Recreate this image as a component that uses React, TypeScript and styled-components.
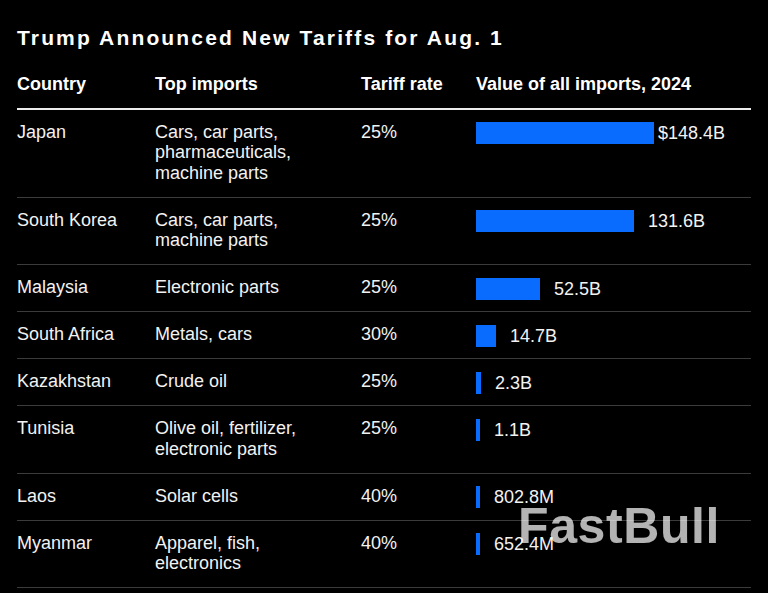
import React from "react";
import styled, { createGlobalStyle } from "styled-components";

const GlobalStyle = createGlobalStyle`
  html, body {
    margin: 0;
    padding: 0;
    background: #000;
  }
  body {
    font-family: "Liberation Sans", Arial, Helvetica, sans-serif;
    color: #f4f4f4;
  }
`;

const Page = styled.div`
  position: relative;
  width: 768px;
  height: 593px;
  box-sizing: border-box;
  padding: 25px 17px 0;
  background: #000;
  overflow: hidden;
`;

const Title = styled.h1`
  margin: 0;
  font-size: 21px;
  line-height: 26px;
  font-weight: 700;
  letter-spacing: 2.15px;
  color: #fff;
`;

const Table = styled.div`
  margin-top: 23px;
  display: flex;
  flex-direction: column;
`;

const gridCols = `138px 206px 115px 1fr`;

const HeaderRow = styled.div`
  display: grid;
  grid-template-columns: ${gridCols};
  padding-bottom: 13px;
  border-bottom: 2px solid #ececec;
`;

const HeaderCell = styled.div`
  font-size: 18px;
  line-height: 20.5px;
  font-weight: 700;
  color: #fff;
  white-space: nowrap;
`;

const Row = styled.div`
  display: grid;
  grid-template-columns: ${gridCols};
  padding: 12px 0 13.5px;
  border-bottom: 1px solid #3b3b3b;
`;

const Cell = styled.div`
  font-size: 18px;
  line-height: 20.5px;
  color: #f2f2f2;
`;

const ValueCell = styled.div`
  display: flex;
  align-items: center;
  align-self: start;
  height: 22px;
  margin-top: 0.5px;
  margin-bottom: -2px;
`;

const Bar = styled.div`
  height: 22px;
  background: #0a6bff;
  flex: none;
`;

const ValueLabel = styled.span`
  margin-left: 14px;
  font-size: 18px;
  line-height: 22px;
  color: #f2f2f2;
  white-space: nowrap;
`;

const Currency = styled.span`
  margin-left: -10px;
`;

const Watermark = styled.div`
  position: absolute;
  left: 518px;
  top: 501px;
  font-size: 50px;
  line-height: 50px;
  font-weight: 700;
  letter-spacing: 0.6px;
  color: rgba(255, 255, 255, 0.7);
  pointer-events: none;
`;

type Item = {
  country: string;
  imports: string[];
  rate: string;
  value: string;
  bar: number;
  currency?: boolean;
};

const rows: Item[] = [
  { country: "Japan", imports: ["Cars, car parts,", "pharmaceuticals,", "machine parts"], rate: "25%", value: "148.4B", bar: 178, currency: true },
  { country: "South Korea", imports: ["Cars, car parts,", "machine parts"], rate: "25%", value: "131.6B", bar: 158 },
  { country: "Malaysia", imports: ["Electronic parts"], rate: "25%", value: "52.5B", bar: 64 },
  { country: "South Africa", imports: ["Metals, cars"], rate: "30%", value: "14.7B", bar: 20 },
  { country: "Kazakhstan", imports: ["Crude oil"], rate: "25%", value: "2.3B", bar: 5 },
  { country: "Tunisia", imports: ["Olive oil, fertilizer,", "electronic parts"], rate: "25%", value: "1.1B", bar: 4 },
  { country: "Laos", imports: ["Solar cells"], rate: "40%", value: "802.8M", bar: 4 },
  { country: "Myanmar", imports: ["Apparel, fish,", "electronics"], rate: "40%", value: "652.4M", bar: 4 },
];

export default function App() {
  return (
    <>
      <GlobalStyle />
      <Page>
        <Title>Trump Announced New Tariffs for Aug. 1</Title>
        <Table>
          <HeaderRow>
            <HeaderCell>Country</HeaderCell>
            <HeaderCell>Top imports</HeaderCell>
            <HeaderCell>Tariff rate</HeaderCell>
            <HeaderCell>Value of all imports, 2024</HeaderCell>
          </HeaderRow>
          {rows.map((r) => (
            <Row key={r.country}>
              <Cell>{r.country}</Cell>
              <Cell>
                {r.imports.map((line, i) => (
                  <React.Fragment key={i}>
                    {i > 0 && <br />}
                    {line}
                  </React.Fragment>
                ))}
              </Cell>
              <Cell>{r.rate}</Cell>
              <ValueCell>
                <Bar style={{ width: r.bar }} />
                <ValueLabel>
                  {r.currency && <Currency>$</Currency>}
                  {r.value}
                </ValueLabel>
              </ValueCell>
            </Row>
          ))}
        </Table>
        <Watermark>FastBull</Watermark>
      </Page>
    </>
  );
}
